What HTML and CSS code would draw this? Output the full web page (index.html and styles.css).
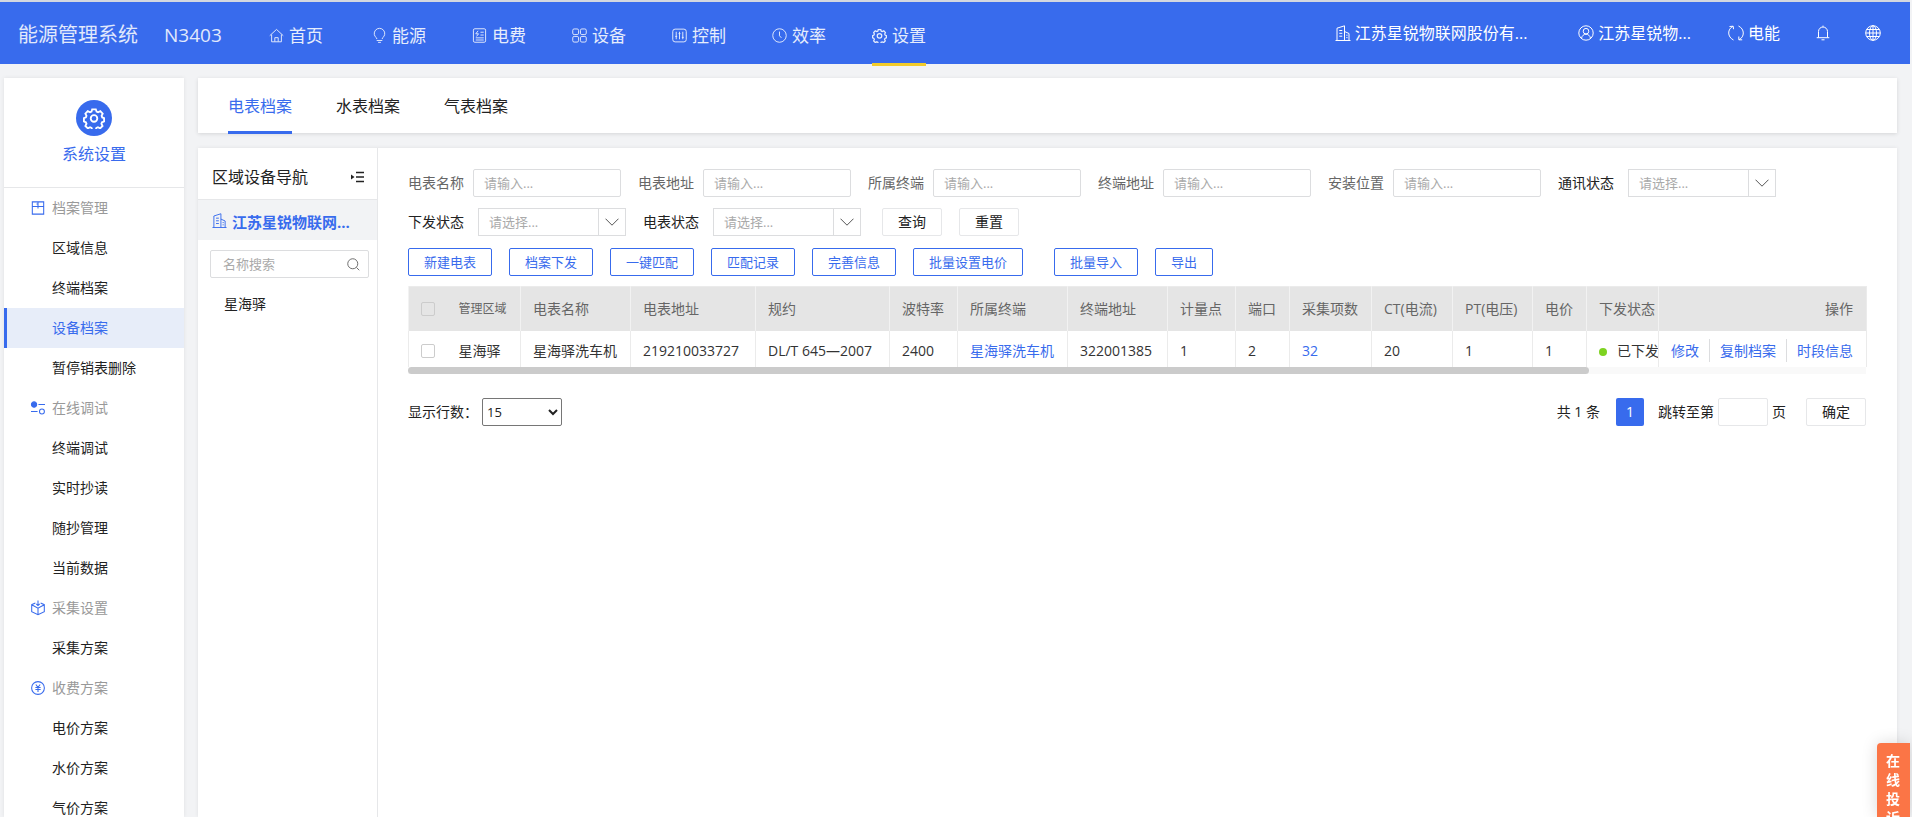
FILE: index.html
```html
<!DOCTYPE html>
<html lang="zh-CN">
<head>
<meta charset="utf-8">
<title>能源管理系统</title>
<link rel="stylesheet" href="styles.css">
</head>
<body>
<svg class="sprite" aria-hidden="true">
  <symbol id="i-gear" viewBox="0 0 24 24"><path d="M10 2.5h4l.8 2.6 1.6.7 2.5-1.2 2.6 2.7-1.2 2.4.7 1.7 2 .8v3.6l-2.3.9-.6 1.6 1.2 2.4-2.6 2.6-2.4-1.200-1.700.7-.8 2.400h-3.600l-.9-2.400-1.600-.7-2.400 1.200-2.700-2.600 1.200-2.400-.7-1.600-2.100-.9v-3.600l2.200-.9.6-1.600-1.200-2.400 2.600-2.700 2.500 1.200 1.600-.7z"/><circle cx="12" cy="12.500" r="3.600"/></symbol>
  <symbol id="i-building" viewBox="0 0 16 16"><path d="M.5 15.500h15M2 15.500V3.200L9.500.8v14.700M9.500 6.500l4.500 2v7M4.300 5.500h3M4.300 8.300h3M4.300 11.200h3M11.300 10.200h1.200M11.300 12.600h1.200"/></symbol>
  <symbol id="i-chevron" viewBox="0 0 14 8"><path d="M.5.7 7 7.200 13.500.7"/></symbol>
</svg>

<header class="topbar">
  <div class="brand"><span>能源管理系统</span><span class="site">N3403</span></div>
  <nav class="mainnav">
    <a href="#"><svg class="icon" viewBox="0 0 16 16"><path d="M.8 8.200 8 1.500l7.200 6.700M2.800 7v7.700h10.400V7M6.200 14.500v-4.200h3.600v4.200"/></svg>首页</a>
    <a href="#"><svg class="icon" viewBox="0 0 16 16"><path d="M5 11.800v-1.100A5.600 5.600 0 1 1 11 10.700v1.100M5 13.300h6M6.500 15.300h3"/></svg>能源</a>
    <a href="#"><svg class="icon" viewBox="0 0 16 16"><rect x="1.500" y=".8" width="13" height="14.400" rx="1.500"/><path d="M6.500 3 4 6.200h3L4.800 9M9 4.500h3.500M9 7.500h3.500M4 10.500h8.500M4 12.800h8.500"/></svg>电费</a>
    <a href="#"><svg class="icon" viewBox="0 0 16 16"><rect x=".8" y="1" width="6.200" height="6" rx="1.500"/><rect x="9" y="1" width="6.200" height="6" rx="1.500"/><rect x=".8" y="9" width="6.200" height="6" rx="1.500"/><rect x="9" y="9" width="6.200" height="6" rx="1.500"/></svg>设备</a>
    <a href="#"><svg class="icon" viewBox="0 0 16 16"><rect x=".8" y="1.200" width="14.400" height="13.600" rx="2.500"/><path d="M4.500 4v8M8 4v8M11.500 4v8M3.500 9h2M7 6h2M10.500 10h2"/></svg>控制</a>
    <a href="#"><svg class="icon" viewBox="0 0 16 16"><circle cx="8" cy="8" r="7.200"/><path d="M8 3.800v4.500l2 2.200"/></svg>效率</a>
    <a href="#" class="current" aria-current="page"><svg class="icon"><use href="#i-gear"/></svg>设置</a>
  </nav>
  <div class="account">
    <a href="#" class="company"><svg class="icon"><use href="#i-building"/></svg>江苏星锐物联网股份有...</a>
    <a href="#" class="user"><svg class="icon" viewBox="0 0 16 16"><circle cx="8" cy="8" r="7.200"/><circle cx="8" cy="6.200" r="2.800"/><path d="M3.500 13.200c.5-2.500 2.300-4 4.500-4s4 1.500 4.500 4"/></svg>江苏星锐物...</a>
    <a href="#" class="energy"><svg class="icon" viewBox="0 0 16 16"><path d="M5 1.300C-.8 4-.8 12 5.500 15M11 14.700c5.800-2.700 5.800-10.700-.5-13.700M10.800 11.500v3.300h3.400M1.500 1.500 5.200 1.200l.3 3"/></svg>电能</a>
    <button type="button" class="iconbtn" aria-label="通知"><svg class="icon" viewBox="0 0 16 16"><path d="M8 .6v1.200M3.500 12.500V6.500a4.500 4.500 0 0 1 9 0v6M1.700 12.700h12.600M6.500 14.800h3"/></svg></button>
    <button type="button" class="iconbtn" aria-label="语言"><svg class="icon" viewBox="0 0 16 16"><circle cx="8" cy="8" r="7.300"/><ellipse cx="8" cy="8" rx="3.500" ry="7.300"/><path d="M8 .7v14.600M.7 8h14.600M1.700 4.500h12.600M1.700 11.500h12.600"/></svg></button>
  </div>
</header>

<div class="layout">
  <aside class="sidebar">
    <div class="module">
      <span class="badge"><svg class="icon"><use href="#i-gear"/></svg></span>
      <span>系统设置</span>
    </div>
    <nav class="menu">
      <h2><svg class="icon" viewBox="0 0 16 16"><path d="M1.500 1h13v14h-13zM1.500 6.200h13M8 1v7.500M6.300 3.500H8"/></svg>档案管理</h2>
      <a href="#">区域信息</a>
      <a href="#">终端档案</a>
      <a href="#" class="current" aria-current="page">设备档案</a>
      <a href="#">暂停销表删除</a>
      <h2><svg class="icon" viewBox="0 0 16 16"><circle cx="3.500" cy="4" r="3" fill="currentColor"/><path d="M8.500 4H16M0 12h7.500"/><circle cx="12.500" cy="12" r="2.800"/></svg>在线调试</h2>
      <a href="#">终端调试</a>
      <a href="#">实时抄读</a>
      <a href="#">随抄管理</a>
      <a href="#">当前数据</a>
      <h2><svg class="icon" viewBox="0 0 16 16"><path d="M5 2.200.8 4.200v8L8 15.700l7.200-3.500v-8L11 2.200M.8 4.200 8 8.200l7.200-4M8 8.200v7.500M8-.5V5M6 3.200l2 2 2-2"/></svg>采集设置</h2>
      <a href="#">采集方案</a>
      <h2><svg class="icon" viewBox="0 0 16 16"><circle cx="8" cy="8" r="7.300"/><path d="M5.500 4 8 7.200 10.500 4M8 7.200V12.500M5 7.500h6M5 9.800h6"/></svg>收费方案</h2>
      <a href="#">电价方案</a>
      <a href="#">水价方案</a>
      <a href="#">气价方案</a>
    </nav>
  </aside>

  <main class="content">
    <nav class="tabs">
      <a href="#" class="current" aria-current="page">电表档案</a>
      <a href="#">水表档案</a>
      <a href="#">气表档案</a>
    </nav>

    <div class="workspace">
      <section class="tree">
        <div class="tree-title">
          <h1>区域设备导航</h1>
          <button type="button" class="iconbtn" aria-label="收起"><svg class="icon" viewBox="0 0 13 12"><path d="M5 1.500h8M5 6h8M5 10.500h8"/><path d="M0 3.500 3.500 6 0 8.500z" fill="currentColor" stroke="none"/></svg></button>
        </div>
        <a href="#" class="tree-root"><svg class="icon"><use href="#i-building"/></svg>江苏星锐物联网...</a>
        <div class="search">
          <input type="text" placeholder="名称搜索" aria-label="名称搜索">
          <button type="button" class="iconbtn" aria-label="搜索"><svg class="icon" viewBox="0 0 14 14"><circle cx="6.200" cy="6.200" r="5.400"/><path d="m10.200 10.200 3 3"/></svg></button>
        </div>
        <a href="#" class="tree-leaf">星海驿</a>
      </section>

      <section class="records">
        <form class="filters">
          <label class="field">电表名称<input type="text" placeholder="请输入..."></label>
          <label class="field">电表地址<input type="text" placeholder="请输入..."></label>
          <label class="field">所属终端<input type="text" placeholder="请输入..."></label>
          <label class="field">终端地址<input type="text" placeholder="请输入..."></label>
          <label class="field">安装位置<input type="text" placeholder="请输入..."></label>
          <label class="field pick">通讯状态<span class="picker"><select><option>请选择...</option></select><svg class="icon"><use href="#i-chevron"/></svg></span></label>
          <label class="field pick">下发状态<span class="picker"><select><option>请选择...</option></select><svg class="icon"><use href="#i-chevron"/></svg></span></label>
          <label class="field pick">电表状态<span class="picker"><select><option>请选择...</option></select><svg class="icon"><use href="#i-chevron"/></svg></span></label>
          <button type="button" class="btn query">查询</button>
          <button type="reset" class="btn">重置</button>
        </form>

        <div class="actions">
          <button type="button">新建电表</button>
          <button type="button">档案下发</button>
          <button type="button">一键匹配</button>
          <button type="button">匹配记录</button>
          <button type="button">完善信息</button>
          <button type="button">批量设置电价</button>
          <button type="button" class="apart">批量导入</button>
          <button type="button">导出</button>
        </div>

        <table class="grid">
          <colgroup>
            <col class="w-check"><col class="w-area"><col class="w-110"><col class="w-addr"><col class="w-proto"><col class="w-baud"><col class="w-110"><col class="w-term"><col class="w-point"><col class="w-port"><col class="w-items"><col class="w-ct"><col class="w-pt"><col class="w-price"><col class="w-status"><col class="w-ops">
          </colgroup>
          <thead>
            <tr><th class="check"><input type="checkbox" aria-label="全选"></th><th class="area">管理区域</th><th>电表名称</th><th>电表地址</th><th>规约</th><th>波特率</th><th>所属终端</th><th>终端地址</th><th>计量点</th><th>端口</th><th>采集项数</th><th>CT(电流)</th><th>PT(电压)</th><th>电价</th><th>下发状态</th><th class="ops">操作</th></tr>
          </thead>
          <tbody>
            <tr><td class="check"><input type="checkbox" aria-label="选择星海驿洗车机"></td><td class="area">星海驿</td><td>星海驿洗车机</td><td>219210033727</td><td>DL/T 645—2007</td><td>2400</td><td><a href="#">星海驿洗车机</a></td><td>322001385</td><td>1</td><td>2</td><td><a href="#">32</a></td><td>20</td><td>1</td><td>1</td><td><span class="dot"></span>已下发</td><td class="ops"><a href="#">修改</a><a href="#">复制档案</a><a href="#">时段信息</a></td></tr>
          </tbody>
        </table>
        <div class="scrolltrack"><div class="scrollthumb"></div></div>

        <div class="pager">
          <label class="rows">显示行数：<select><option>15</option></select></label>
          <span class="total">共 1 条</span>
          <button type="button" class="page" aria-current="page">1</button>
          <label class="jump">跳转至第<input type="text">页</label>
          <button type="button" class="btn">确定</button>
        </div>
      </section>
    </div>
  </main>
</div>
<a href="#" class="feedback">在线投诉</a>
</body>
</html>
```
FILE: styles.css
```css
:root {
  --blue: #386bed;
  --line: #e6e7e9;
  --page: #f2f3f5;
}
* { box-sizing: border-box; }
body {
  margin: 0;
  height: 100vh;
  overflow: hidden;
  display: flex;
  flex-direction: column;
  background: var(--page);
  color: #222;
  font: 14px/20px "Open Sans", "Noto Sans CJK SC", sans-serif;
}
a { color: inherit; text-decoration: none; }
h1, h2 { margin: 0; font-weight: 400; }
button, input, select { font: inherit; color: inherit; margin: 0; }
button { padding: 0; background: #fff; white-space: nowrap; }
.sprite { position: absolute; width: 0; height: 0; }
.icon {
  flex: none;
  width: 14px;
  height: 14px;
  overflow: visible;
  fill: none;
  stroke: currentColor;
  stroke-width: 1;
}
.iconbtn { display: flex; border: 0; background: none; }

/* top bar */
.topbar {
  flex: none;
  display: flex;
  align-items: center;
  height: 64px;
  margin-right: 2px;
  padding: 0 29px 0 18px;
  border-top: 2px solid #d3d7e0;
  background: var(--blue);
  color: #fff;
  white-space: nowrap;
}
.brand { display: flex; gap: 26px; width: 251px; padding-top: 4px; font-size: 20px; opacity: .85; }
.site { font-size: 19px; }
.mainnav { display: flex; gap: 46px; align-self: flex-start; font-size: 17px; }
.mainnav a {
  display: flex;
  align-items: center;
  gap: 5px;
  height: 64px;
  padding-top: 6px;
  border-bottom: 3px solid transparent;
  color: #e6edfc;
}
.mainnav .icon { width: 15px; height: 15px; }
.mainnav a:first-child { margin-right: 3px; }
.mainnav .current { border-color: #f2cb2b; }
.mainnav .current .icon { stroke-width: 2; }
.account { display: flex; align-items: center; margin-left: auto; font-size: 16px; }
.account a { display: flex; align-items: center; gap: 4px; }
.account .icon { width: 16px; height: 16px; }
.account .company { margin-right: 51px; }
.account .user { margin-right: 37px; }
.account .energy { margin-right: 35px; }
.account .iconbtn + .iconbtn { margin-left: 34px; }

/* frame */
.layout { flex: 1; display: flex; gap: 14px; min-height: 0; padding: 14px 15px 0 4px; }
.sidebar {
  flex: none;
  width: 180px;
  overflow: hidden;
  background: #fff;
  box-shadow: 0 0 4px rgba(0, 0, 0, .08);
}
.module {
  display: flex;
  flex-direction: column;
  align-items: center;
  gap: 8px;
  height: 110px;
  padding-top: 22px;
  border-bottom: 1px solid var(--line);
  color: var(--blue);
  font-size: 16px;
}
.badge { display: grid; place-items: center; width: 36px; height: 36px; border-radius: 50%; background: var(--blue); color: #fff; }
.badge .icon { width: 22px; height: 22px; stroke-width: 2; }
.menu h2, .menu a { display: flex; align-items: center; height: 40px; font-size: 14px; }
.menu h2 { gap: 7px; padding-left: 27px; color: #999; }
.menu .icon { color: var(--blue); stroke-width: 1.2; }
.menu a { padding-left: 48px; }
.menu .current { padding-left: 45px; border-left: 3px solid var(--blue); background: #e7edf9; color: var(--blue); }

.content { flex: 1; display: flex; flex-direction: column; gap: 15px; min-width: 0; }
.tabs {
  flex: none;
  display: flex;
  gap: 44px;
  height: 55px;
  padding-left: 30px;
  background: #fff;
  box-shadow: 0 1px 4px rgba(0, 0, 0, .12);
  font-size: 16px;
}
.tabs a { height: 56px; line-height: 56px; }
.tabs .current { border-bottom: 3px solid var(--blue); color: var(--blue); }
.workspace { flex: 1; display: flex; min-height: 0; background: #fff; box-shadow: 0 0 4px rgba(0, 0, 0, .08); }

/* area tree */
.tree { flex: none; width: 180px; border-right: 1px solid var(--line); }
.tree-title { display: flex; align-items: center; justify-content: space-between; height: 52px; padding: 6px 13px 0 14px; border-bottom: 1px solid var(--line); }
.tree-title h1 { font-size: 16px; }
.tree-title .icon { width: 13px; height: 12px; stroke-width: 1.5; }
.tree-root { display: flex; align-items: center; gap: 5px; height: 40px; padding: 4px 0 0 14px; background: var(--page); color: var(--blue); font-size: 15px; font-weight: 700; }
.tree-root .icon { width: 15px; height: 15px; margin-bottom: 4px; }
.search { display: flex; align-items: center; height: 28px; margin: 10px 8px 0 12px; padding: 0 8px 0 12px; border: 1px solid #dcdddf; border-radius: 2px; }
.search input { flex: 1; min-width: 0; padding: 0; border: 0; outline: 0; font-size: 13px; }
.search .icon { width: 13px; height: 13px; color: #666; }
.tree-leaf { display: block; margin-top: 16px; padding-left: 26px; }
::placeholder { color: #aaa; opacity: 1; }

/* filters */
.records { flex: 1; min-width: 0; padding: 21px 31px 0 30px; }
.filters { display: flex; flex-wrap: wrap; align-items: center; gap: 11px 17px; padding-right: 60px; }
.field { display: flex; align-items: center; gap: 9px; color: #666; white-space: nowrap; }
.field input { width: 148px; height: 28px; padding: 0 10px; border: 1px solid #dcdddf; border-radius: 2px; font-size: 13px; }
.pick { gap: 14px; color: #222; }
.picker { display: flex; align-items: center; width: 148px; height: 28px; border: 1px solid #dcdddf; }
.picker select { flex: 1; align-self: stretch; padding: 0 10px; border: 0; border-right: 1px solid #dcdddf; appearance: none; background: none; color: #aaa; font-size: 13px; }
.picker .icon { width: 14px; height: 8px; margin: 0 6px; color: #555; }
.btn { width: 60px; height: 28px; border: 1px solid #e6e7e9; border-radius: 2px; }
.query { margin-left: 4px; }
.actions { display: flex; gap: 17px; margin: 12px 0 10px; font-size: 13px; }
.actions button { height: 28px; padding: 0 15px; border: 1px solid var(--blue); border-radius: 2px; color: var(--blue); }
.actions .apart { margin-left: 14px; }

/* table */
.grid { width: 100%; table-layout: fixed; border-collapse: collapse; border: 1px solid #ebebeb; border-bottom: 0; white-space: nowrap; }
.grid th, .grid td { height: 44px; padding: 0 0 0 12px; border-left: 1px solid #ebebeb; overflow: hidden; text-align: left; }
.grid th { background: #e5e5e5; color: #666; font-weight: 400; border-color: #f2f2f2; }
.grid td { height: 36px; padding-top: 4px; color: #333; }
.grid .area { border-left: 0; }
.grid th.area { font-size: 12px; }
.grid .check { line-height: 0; }
.grid a { color: var(--blue); }
.grid .ops { padding-right: 13px; text-align: right; }
.ops a + a { margin-left: 10px; padding: 2px 0 2px 10px; border-left: 1px solid #dcdddf; }
.w-check { width: 38px; }
.w-area { width: 74px; }
.w-110 { width: 110px; }
.w-addr { width: 125px; }
.w-proto { width: 134px; }
.w-baud { width: 68px; }
.w-term { width: 100px; }
.w-point { width: 68px; }
.w-port { width: 54px; }
.w-items { width: 82px; }
.w-ct { width: 81px; }
.w-pt { width: 80px; }
.w-price { width: 54px; }
.w-status { width: 72px; }
.w-ops { width: 208px; }
.grid input { appearance: none; width: 14px; height: 14px; border: 1px solid #ccc; border-radius: 2px; }
.dot { display: inline-block; width: 8px; height: 8px; margin-right: 10px; border-radius: 50%; background: #7ed321; }
.scrolltrack { height: 7px; background: #f9f9f9; }
.scrollthumb { width: 81%; height: 7px; border-radius: 4px; background: #cbcbcb; }

/* pager */
.pager { display: flex; align-items: center; margin-top: 24px; }
.rows { display: flex; align-items: center; margin-right: auto; gap: 4px; }
.rows select { width: 80px; height: 28px; border: 1px solid #767676; border-radius: 2px; background: #fff; font-size: 13px; }
.page { width: 28px; height: 28px; margin: 0 14px 0 16px; border: 0; border-radius: 2px; background: var(--blue); color: #fff; }
.jump { display: flex; align-items: center; gap: 4px; margin-right: 20px; }
.jump input { width: 50px; height: 28px; border: 1px solid #e6e7e9; border-radius: 2px; }

.feedback {
  position: fixed;
  right: 2px;
  bottom: 0;
  width: 33px;
  height: 74px;
  padding: 8px 9px 0;
  overflow: hidden;
  border-radius: 4px 0 0 0;
  background: #fb7546;
  box-shadow: 0 0 16px rgba(0, 0, 0, .15);
  color: #fff;
  font-weight: 700;
  line-height: 19px;
  word-break: break-all;
}
```
